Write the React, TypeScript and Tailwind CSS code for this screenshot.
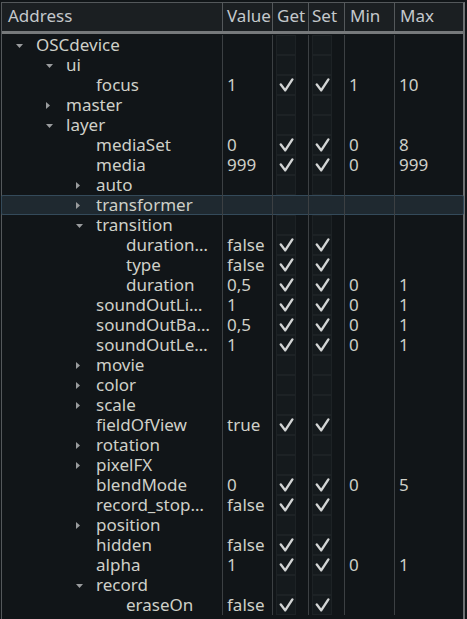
import React from 'react'

type Row = {
  level: number
  name: string
  open?: boolean
  value?: string
  check?: boolean
  min?: string
  max?: string
  selected?: boolean
}

const rows: Row[] = [
  { level: 0, name: 'OSCdevice', open: true },
  { level: 1, name: 'ui', open: true },
  { level: 2, name: 'focus', value: '1', check: true, min: '1', max: '10' },
  { level: 1, name: 'master', open: false },
  { level: 1, name: 'layer', open: true },
  { level: 2, name: 'mediaSet', value: '0', check: true, min: '0', max: '8' },
  { level: 2, name: 'media', value: '999', check: true, min: '0', max: '999' },
  { level: 2, name: 'auto', open: false },
  { level: 2, name: 'transformer', open: false, selected: true },
  { level: 2, name: 'transition', open: true },
  { level: 3, name: 'duration…', value: 'false', check: true },
  { level: 3, name: 'type', value: 'false', check: true },
  { level: 3, name: 'duration', value: '0,5', check: true, min: '0', max: '1' },
  { level: 2, name: 'soundOutLi…', value: '1', check: true, min: '0', max: '1' },
  { level: 2, name: 'soundOutBa…', value: '0,5', check: true, min: '0', max: '1' },
  { level: 2, name: 'soundOutLe…', value: '1', check: true, min: '0', max: '1' },
  { level: 2, name: 'movie', open: false },
  { level: 2, name: 'color', open: false },
  { level: 2, name: 'scale', open: false },
  { level: 2, name: 'fieldOfView', value: 'true', check: true },
  { level: 2, name: 'rotation', open: false },
  { level: 2, name: 'pixelFX', open: false },
  { level: 2, name: 'blendMode', value: '0', check: true, min: '0', max: '5' },
  { level: 2, name: 'record_stop…', value: 'false', check: true },
  { level: 2, name: 'position', open: false },
  { level: 2, name: 'hidden', value: 'false', check: true },
  { level: 2, name: 'alpha', value: '1', check: true, min: '0', max: '1' },
  { level: 2, name: 'record', open: true },
  { level: 3, name: 'eraseOn', value: 'false', check: true },
]

const indent = ['w-0', 'w-[30px]', 'w-[60px]', 'w-[90px]']

function Arrow({ open }: { open?: boolean }) {
  if (open === undefined) return null
  return open ? (
    <svg width="7" height="4" viewBox="0 0 7 4" className="mt-[1px]">
      <path d="M0 0H7L3.5 4Z" fill="#9a9c9e" />
    </svg>
  ) : (
    <svg width="4" height="7" viewBox="0 0 4 7">
      <path d="M0 0V7L4 3.5Z" fill="#9a9c9e" />
    </svg>
  )
}

function Check() {
  return (
    <svg width="15" height="14" viewBox="0 0 15 14">
      <path
        d="M1.8 6.5L6.2 12.4L13.4 1.4"
        fill="none"
        stroke="#d2d4d4"
        strokeWidth="2.4"
        strokeLinecap="round"
        strokeLinejoin="round"
      />
    </svg>
  )
}

function CheckCell({ on, box }: { on?: boolean; box: boolean }) {
  return (
    <div className="h-5 border-r border-[#3c4043] pl-[3px]">
      <div
        className={`w-[20px] h-5 flex items-center justify-center ${
          box ? 'border border-[#1d2225] bg-[#151a1d]' : ''
        }`}
      >
        {on && <Check />}
      </div>
    </div>
  )
}

const cols = 'grid grid-cols-[221px_50px_36px_36px_50px_68px]'

export default function App() {
  return (
    <div
      className="w-[467px] h-[619px] bg-[#111518] overflow-hidden pt-[2px] pl-[1px] text-[17px] leading-5 text-[#cfd0c8]"
      style={{ fontFamily: '"Noto Sans", "DejaVu Sans", sans-serif' }}
    >
      <div className="w-[464px] h-[640px] border-l border-t border-[#54585b] border-r-2 border-r-[#6e7173]">
        <div className={`${cols} h-[31px] bg-[#1b1f22] border-b-[3px] border-[#76797b] text-[#c4c8cc]`}>
          <div className="pl-[6px] pt-[3px] border-r border-[#54585b]">Address</div>
          <div className="pl-[4px] pt-[3px] border-r border-[#54585b] overflow-hidden whitespace-nowrap">Value</div>
          <div className="pl-[4px] pt-[3px] border-r border-[#54585b]">Get</div>
          <div className="pl-[3px] pt-[3px] border-r border-[#54585b]">Set</div>
          <div className="pl-[5px] pt-[3px] border-r border-[#54585b]">Min</div>
          <div className="pl-[5px] pt-[3px]">Max</div>
        </div>
        <div className="pt-px">
          {rows.map((r, i) => (
            <div key={i} className={`${cols} h-5 relative`}>
              {r.selected && (
                <div className="absolute -left-px -right-px top-0 bottom-0 rounded-[2px] border border-[#344a5a] bg-[#1f2930]" />
              )}
              <div className="relative flex items-center h-5 border-r border-[#3c4043] whitespace-nowrap overflow-hidden">
                <div className={`${indent[r.level]} shrink-0`} />
                <div className="w-[34px] shrink-0 pl-[14px] flex items-center">
                  <Arrow open={r.open} />
                </div>
                <span>{r.name}</span>
              </div>
              <div className="relative h-5 pl-[4px] border-r border-[#3c4043]">{r.value}</div>
              <div className="relative">
                <CheckCell on={r.check} box={!r.selected} />
              </div>
              <div className="relative">
                <CheckCell on={r.check} box={!r.selected} />
              </div>
              <div className="relative h-5 pl-[4px] border-r border-[#3c4043]">{r.min}</div>
              <div className="relative h-5 pl-[4px]">{r.max}</div>
            </div>
          ))}
        </div>
      </div>
    </div>
  )
}
